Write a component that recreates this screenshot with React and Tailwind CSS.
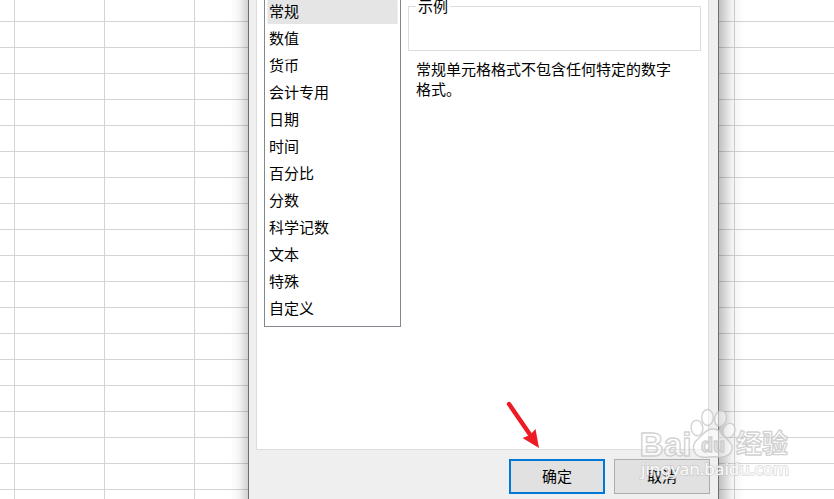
const categories = [
  "常规",
  "数值",
  "货币",
  "会计专用",
  "日期",
  "时间",
  "百分比",
  "分数",
  "科学记数",
  "文本",
  "特殊",
  "自定义",
];

const rows = Array.from({ length: 20 }, (_, i) => i);
const cols = Array.from({ length: 9 }, (_, i) => i);

const SheetGrid = () => (
  <div className="flex flex-col">
    {rows.map((row) => (
      <div
        key={row}
        className="flex h-[26px] shrink-0 border-b border-[#d4d4d4] first:h-[22px]"
      >
        {cols.map((col) => (
          <div
            key={col}
            className="w-[90px] shrink-0 border-r border-[#d4d4d4] first:w-[15px]"
          />
        ))}
      </div>
    ))}
  </div>
);

const CategoryList = () => (
  <ul className="h-[327px] w-[137px] border border-t-0 border-[#828790] px-0.5">
    {categories.map((name, i) => (
      <li
        key={name}
        className={
          i === 0
            ? "h-6 border-x border-dotted border-[#f8f8f8] bg-[#e5e5e5] pl-px leading-[22px]"
            : "h-[27px] pl-0.5 leading-[27px]"
        }
      >
        {name}
      </li>
    ))}
  </ul>
);

const Sample = () => (
  <div className="ml-[7px] w-[293px]">
    <div className="relative mt-[6px] h-[45px] border border-[#dcdcdc]">
      <span className="absolute -top-[13px] left-[7px] bg-white px-0.5 leading-6">示例</span>
    </div>
    <p className="mt-2 pl-2 leading-5">
      常规单元格格式不包含任何特定的数字
      <br />
      格式。
    </p>
  </div>
);

const Arrow = () => (
  <svg className="absolute left-[248px] top-[396px] h-14 w-12" viewBox="0 0 48 56">
    <path d="M12 8 34 40" stroke="#ed1c24" strokeWidth="4.4" strokeLinecap="round" />
    <path d="M42 52 25.5 42 33 39 38.5 33Z" fill="#ed1c24" />
  </svg>
);

const Watermark = () => (
  <svg
    className="pointer-events-none absolute left-[630px] top-[400px] h-[99px] w-[204px]"
    viewBox="0 0 204 99"
  >
    <g
      fill="#fff"
      fillOpacity=".5"
      stroke="#c6c6c6"
      strokeOpacity=".8"
      strokeWidth="1.4"
      strokeLinejoin="round"
    >
      <text
        x="9.5"
        y="55.5"
        fontFamily="Liberation Sans"
        fontSize="34"
        fontWeight="700"
        textLength="52"
        lengthAdjust="spacingAndGlyphs"
      >
        Bai
      </text>
      <ellipse cx="67" cy="28" rx="5.8" ry="7.8" transform="rotate(-10 67 28)" />
      <ellipse cx="77.5" cy="17.5" rx="5.8" ry="8" />
      <ellipse cx="90.5" cy="18.5" rx="5.8" ry="7.8" transform="rotate(14 90.5 18.5)" />
      <ellipse cx="99" cy="30.5" rx="5.8" ry="7.3" transform="rotate(20 99 30.5)" />
      <path d="M82.5 29C77 29 74 33 71 36L66 41C61 47 64 56 72 57C77 58 82 56 88 57C96 58 103 54 102 46C100 41 94 37 91 33C89 30 86 29 82.5 29Z" />
      <text
        x="71"
        y="52"
        fontFamily="Liberation Sans"
        fontSize="20"
        fontWeight="700"
        fill="#d8d8d8"
        textLength="24"
        lengthAdjust="spacingAndGlyphs"
      >
        du
      </text>
      <text x="106" y="53" fontFamily="Noto Sans CJK SC" fontSize="26" fontWeight="700">
        经验
      </text>
    </g>
    <text
      x="11"
      y="75"
      fontFamily="Noto Sans"
      fontSize="16"
      fill="#fff"
      fillOpacity=".9"
      stroke="#c4c4c4"
      strokeOpacity=".55"
      strokeWidth="1.8"
      paintOrder="stroke"
      textLength="148"
      lengthAdjust="spacingAndGlyphs"
    >
      jingyan.baidu.com
    </text>
  </svg>
);

const FormatDialog = () => (
  <div className="absolute left-[248px] top-0 flex h-[499px] w-[471px] flex-col border-x border-[#6e6e6e] bg-[#efefef] px-[7px]">
    <div className="flex h-[450px] w-[453px] border border-t-0 border-[#dcdcdc] bg-white pl-[7px]">
      <CategoryList />
      <Sample />
    </div>
    <div className="mt-[9px] flex h-[35px] gap-[9px] pl-[253px]">
      <button className="w-24 border-2 border-[#0078d7] bg-[#e1e1e1]">确定</button>
      <button className="w-24 border border-[#adadad] bg-[#e1e1e1]">取消</button>
    </div>
    <Arrow />
  </div>
);

export default function App() {
  return (
    <div className="relative h-[499px] w-[834px] overflow-hidden bg-white font-['Noto_Sans_CJK_SC',sans-serif] text-[15px] text-black">
      <SheetGrid />
      {/* soft shadow the dialog throws on the sheet */}
      <div className="absolute left-[230px] top-0 h-full w-[18px] bg-linear-to-r from-black/0 via-black/4 to-black/18" />
      <div className="absolute left-[719px] top-0 h-full w-[26px] bg-linear-to-r from-black/25 via-black/5 to-black/0" />
      <FormatDialog />
      <Watermark />
    </div>
  );
}
